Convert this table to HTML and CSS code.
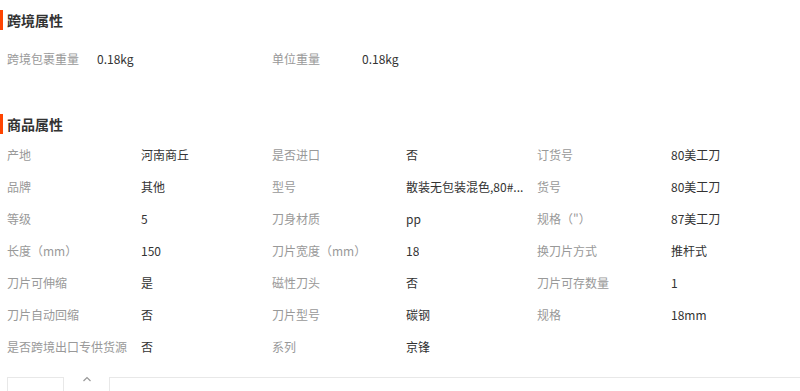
FILE: index.html
```html
<!DOCTYPE html>
<html lang="zh">
<head>
<meta charset="utf-8">
<link rel="stylesheet" href="styles.css">
</head>
<body>
<div class="page">
  <h2 class="title">跨境属性</h2>
  <div class="grid grid-cross">
    <div class="cell"><span class="label">跨境包裹重量</span><span class="value">0.18kg</span></div>
    <div class="cell"><span class="label">单位重量</span><span class="value">0.18kg</span></div>
  </div>

  <h2 class="title title-2">商品属性</h2>
  <div class="grid grid-goods">
    <div class="cell"><span class="label">产地</span><span class="value">河南商丘</span></div>
    <div class="cell"><span class="label">是否进口</span><span class="value">否</span></div>
    <div class="cell"><span class="label">订货号</span><span class="value">80美工刀</span></div>

    <div class="cell"><span class="label">品牌</span><span class="value">其他</span></div>
    <div class="cell"><span class="label">型号</span><span class="value">散装无包装混色,80#...</span></div>
    <div class="cell"><span class="label">货号</span><span class="value">80美工刀</span></div>

    <div class="cell"><span class="label">等级</span><span class="value">5</span></div>
    <div class="cell"><span class="label">刀身材质</span><span class="value">pp</span></div>
    <div class="cell"><span class="label">规格（"）</span><span class="value">87美工刀</span></div>

    <div class="cell"><span class="label">长度（mm）</span><span class="value">150</span></div>
    <div class="cell"><span class="label">刀片宽度（mm）</span><span class="value">18</span></div>
    <div class="cell"><span class="label">换刀片方式</span><span class="value">推杆式</span></div>

    <div class="cell"><span class="label">刀片可伸缩</span><span class="value">是</span></div>
    <div class="cell"><span class="label">磁性刀头</span><span class="value">否</span></div>
    <div class="cell"><span class="label">刀片可存数量</span><span class="value">1</span></div>

    <div class="cell"><span class="label">刀片自动回缩</span><span class="value">否</span></div>
    <div class="cell"><span class="label">刀片型号</span><span class="value">碳钢</span></div>
    <div class="cell"><span class="label">规格</span><span class="value">18mm</span></div>

    <div class="cell"><span class="label">是否跨境出口专供货源</span><span class="value">否</span></div>
    <div class="cell"><span class="label">系列</span><span class="value">京锋</span></div>
    <div class="cell"></div>
  </div>

  <div class="tabs">
    <div class="tab-box tab-first"></div>
    <div class="tab-caret">
      <svg width="10" height="6" viewBox="0 0 10 6"><path d="M1.5 5 L5 1.5 L8.5 5" fill="none" stroke="#999" stroke-width="1.2"/></svg>
    </div>
    <div class="tab-box tab-main"></div>
  </div>
</div>
</body>
</html>
```

FILE: styles.css
```css
* { box-sizing: border-box; }
html, body { margin: 0; padding: 0; background: #fff; }
body {
  font-family: "Noto Sans CJK SC", "Noto Sans", "Liberation Sans", sans-serif;
  font-size: 12px;
  color: #333;
  overflow: hidden;
}
.page { width: 800px; height: 391px; overflow: hidden; }

.title {
  margin: 10px 0 0 0;
  font-size: 14px;
  font-weight: bold;
  line-height: 20px;
  height: 20px;
  color: #333;
  border-left: 3px solid #ff4400;
  padding-left: 4px;
  display: flex;
  align-items: center;
}
.title-2 { margin-top: 40px; }

.grid { display: grid; padding-left: 7px; }
.grid-cross { grid-template-columns: 265px 265px; margin-top: 12px; }
.grid-goods { grid-template-columns: 265px 265px 265px; margin-top: 4px; }

.cell { display: flex; height: 32px; align-items: center; white-space: nowrap; }
.label { color: #999; flex: none; }
.value { color: #333; overflow: hidden; text-overflow: ellipsis; }

.grid-cross .label { width: 90px; }
.grid-goods .label { width: 134px; }

.tabs {
  display: flex;
  margin-top: 15px;
  height: 40px;
  padding-left: 7px;
}
.tab-box {
  border-top: 1px solid #e8e8e8;
  border-left: 1px solid #e8e8e8;
}
.tab-first { width: 57px; border-right: 1px solid #e8e8e8; }
.tab-caret {
  width: 45px;
  display: flex;
  justify-content: center;
  align-items: flex-start;
}
.tab-caret svg { display: block; margin-top: -1px; }
.tab-main { flex: 1; }
```
